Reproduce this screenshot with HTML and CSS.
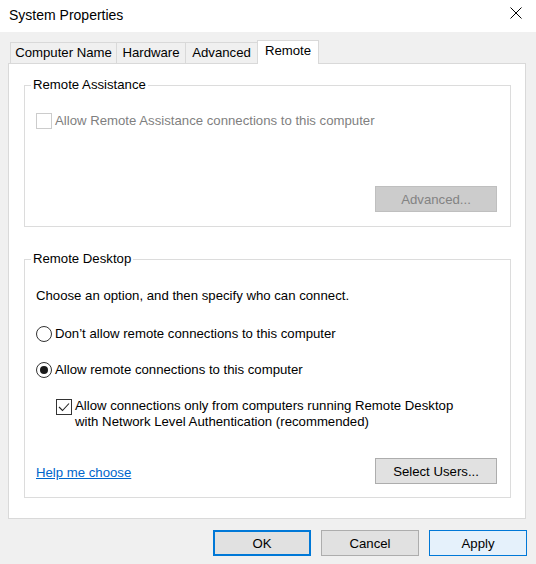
FILE: index.html
```html
<!DOCTYPE html>
<html lang="en">
<head>
  <meta charset="UTF-8" />
  <title>System Properties</title>
  <link rel="stylesheet" href="styles.css">
</head>
<body>

  <div class="titlebar">
    <span class="title">System Properties</span>
    <svg class="close" width="12" height="12" viewBox="0 0 12 12">
      <path d="M0.5 0.5 L11.5 11.5 M11.5 0.5 L0.5 11.5" stroke="#000" stroke-width="1" fill="none"/>
    </svg>
  </div>

  <div class="dialog">
    <div class="tabs">
      <div class="tab t-name">Computer Name</div>
      <div class="tab t-hw">Hardware</div>
      <div class="tab t-adv">Advanced</div>
      <div class="tab t-remote active">Remote</div>
    </div>

    <div class="panel">
      <fieldset class="group assist">
        <legend>Remote Assistance</legend>
        <div class="option disabled">
          <span class="box"></span>
          <span>Allow Remote Assistance connections to this computer</span>
        </div>
        <div class="btn-row">
          <button class="btn" disabled>Advanced...</button>
        </div>
      </fieldset>

      <fieldset class="group desktop">
        <legend>Remote Desktop</legend>
        <p class="intro">Choose an option, and then specify who can connect.</p>
        <div class="option radio-row first">
          <span class="radio"></span>
          <span>Don&rsquo;t allow remote connections to this computer</span>
        </div>
        <div class="option radio-row">
          <span class="radio checked"></span>
          <span>Allow remote connections to this computer</span>
        </div>
        <div class="option nla">
          <span class="box checked">
            <svg width="14" height="14" viewBox="0 0 14 14">
              <path d="M2 7 L5.5 10.5 L12 3.5" stroke="#222" stroke-width="1.1" fill="none"/>
            </svg>
          </span>
          <span>Allow connections only from computers running Remote Desktop<br/>with Network Level Authentication (recommended)</span>
        </div>
        <div class="btn-row split">
          <a class="link" href="#">Help me choose</a>
          <button class="btn">Select Users...</button>
        </div>
      </fieldset>
    </div>

    <div class="footer">
      <button class="btn wide default">OK</button>
      <button class="btn wide">Cancel</button>
      <button class="btn wide apply">Apply</button>
    </div>
  </div>

</body>
</html>
```

FILE: styles.css
```css
body {
  margin: 0;
  width: 536px;
  height: 564px;
  background: #f0f0f0;
  font-family: 'Liberation Sans', Arial, sans-serif;
  font-size: 13.2px;
  color: #000;
  overflow: hidden;
}

.titlebar {
  height: 32px;
  background: #fff;
  display: flex;
  align-items: center;
  justify-content: space-between;
  padding: 0 14px 0 9px;
}

.title {
  font-size: 14px;
  margin-bottom: 3px;
}

.close {
  margin-bottom: 6px;
}

.dialog {
  padding: 8px 10px 0 8px;
}

.tabs {
  display: flex;
  align-items: flex-end;
  height: 23px;
  padding-left: 2px;
}

.tab {
  height: 21px;
  line-height: 20px;
  text-align: center;
  border: 1px solid #d9d9d9;
  border-bottom: none;
  margin-left: -1px;
  box-sizing: border-box;
  background: #f0f0f0;
}

.tab:first-child {
  margin-left: 0;
}

.t-name { width: 107px; }
.t-hw { width: 70px; }
.t-adv { width: 73px; }
.t-remote { width: 62px; }

.tab.active {
  height: 24px;
  line-height: 20px;
  margin-bottom: -1px;
  background: #fff;
  position: relative;
  z-index: 1;
}

.panel {
  background: #fff;
  border: 1px solid #d9d9d9;
  padding: 13px 14px 20px 15px;
}

.group {
  margin: 0;
  border: 1px solid #dcdcdc;
  padding: 20px 13px 14px 11px;
}

.group legend {
  line-height: 16px;
  padding: 0 2px;
  margin-left: -5px;
}

.group.desktop {
  margin-top: 24px;
  padding-top: 21px;
  padding-bottom: 13px;
}

.option {
  display: flex;
  align-items: center;
  line-height: 16px;
}

.option .box {
  width: 16px;
  height: 16px;
  box-sizing: border-box;
  border: 1px solid #333;
  margin-right: 3px;
  flex-shrink: 0;
  display: flex;
  align-items: center;
  justify-content: center;
}

.option.disabled {
  color: #7f7f7f;
}

.option.disabled .box {
  border-color: #cccccc;
}

.btn-row {
  display: flex;
  justify-content: flex-end;
  margin-top: 57px;
}

.btn {
  font-family: inherit;
  font-size: 13.2px;
  color: #000;
  width: 122px;
  height: 26px;
  background: #e1e1e1;
  border: 1px solid #adadad;
  padding: 0;
}

.btn:disabled {
  background: #cccccc;
  border-color: #bfbfbf;
  color: #838383;
}

.intro {
  margin: 0;
  line-height: 16px;
}

.radio {
  width: 16px;
  height: 16px;
  box-sizing: border-box;
  border: 1px solid #333;
  border-radius: 50%;
  margin-right: 3px;
  display: flex;
  align-items: center;
  justify-content: center;
  flex-shrink: 0;
}

.radio.checked::after {
  content: "";
  width: 8px;
  height: 8px;
  border-radius: 50%;
  background: #1a1a1a;
}

.radio-row {
  margin-top: 20px;
}

.radio-row.first {
  margin-top: 22px;
}

.nla {
  align-items: flex-start;
  margin-top: 20px;
  margin-left: 20px;
}

.nla .box {
  margin-top: 1px;
}

.btn-row.split {
  justify-content: space-between;
  align-items: center;
  margin-top: 28px;
}

.link {
  color: #0066cc;
  text-decoration: underline;
  margin-top: 3px;
}

.footer {
  display: flex;
  justify-content: flex-end;
  gap: 10px;
  margin-top: 11px;
  margin-right: -1px;
}

.btn.wide {
  width: 98px;
}

.btn.default {
  border: 2px solid #0078d7;
}

.btn.apply {
  background: #e5f1fb;
  border-color: #0078d7;
}
```
